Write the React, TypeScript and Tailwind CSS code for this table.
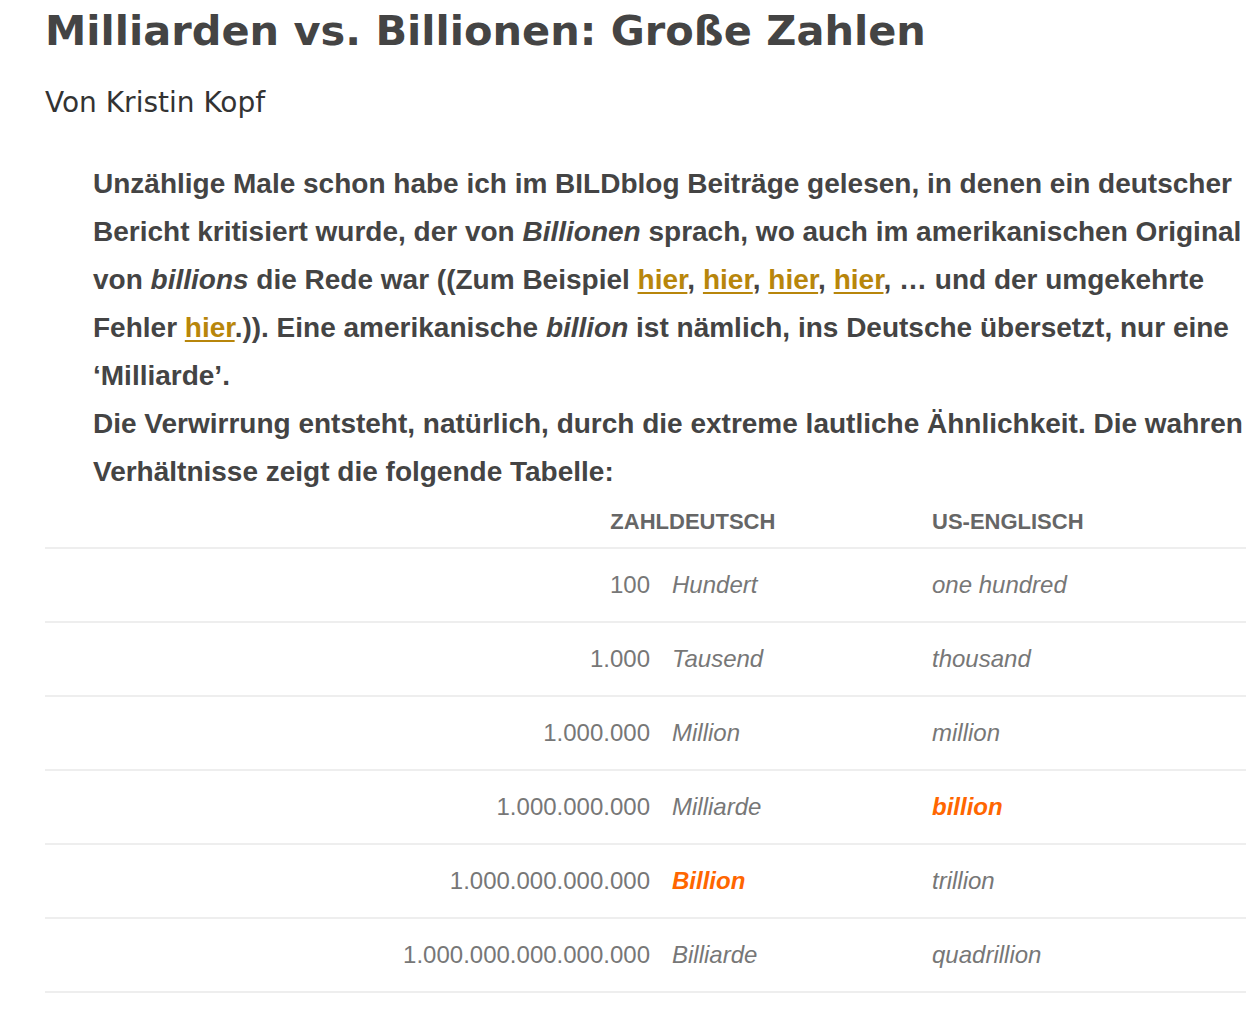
import React from "react";

const rows: { n: string; de: React.ReactNode; en: React.ReactNode }[] = [
  { n: "100", de: "Hundert", en: "one hundred" },
  { n: "1.000", de: "Tausend", en: "thousand" },
  { n: "1.000.000", de: "Million", en: "million" },
  { n: "1.000.000.000", de: "Milliarde", en: <strong className="font-bold text-[#ff6600]">billion</strong> },
  { n: "1.000.000.000.000", de: <strong className="font-bold text-[#ff6600]">Billion</strong>, en: "trillion" },
  { n: "1.000.000.000.000.000", de: "Billiarde", en: "quadrillion" },
];

const Link = ({ children }: { children: React.ReactNode }) => (
  <a href="#" className="text-[#b8860b] underline decoration-[#b8860b] underline-offset-[3px]">
    {children}
  </a>
);

export default function App() {
  return (
    <div className="w-[1246px] overflow-hidden bg-white pl-[45px] text-[#444]">
      <h1 className="pt-[5px] text-[41.5px] font-bold leading-[52px] text-[#444] [font-family:'DejaVu_Sans',sans-serif]">
        Milliarden vs. Billionen: Große Zahlen
      </h1>
      <p className="mt-[29px] text-[28px] leading-[34px] text-[#333] [font-family:'DejaVu_Sans',sans-serif]">
        Von Kristin Kopf
      </p>
      <div className="mt-[40px] pl-[48px] text-[28px] font-bold leading-[48px] text-[#444] [font-family:'Liberation_Sans',Arial,sans-serif]">
        <p>
          Unzählige Male schon habe ich im BILDblog Beiträge gelesen, in denen ein deutscher Bericht kritisiert wurde, der von{" "}
          <em>Billionen</em> sprach, wo auch im amerikanischen Original von <em>billions</em> die Rede war ((Zum Beispiel{" "}
          <Link>hier</Link>, <Link>hier</Link>, <Link>hier</Link>, <Link>hier</Link>, … und der umgekehrte Fehler{" "}
          <Link>hier</Link>.)). Eine amerikanische <em>billion</em> ist nämlich, ins Deutsche übersetzt, nur eine ‘Milliarde’.
        </p>
        <p>
          Die Verwirrung entsteht, natürlich, durch die extreme lautliche Ähnlichkeit. Die wahren Verhältnisse zeigt die folgende Tabelle:
        </p>
      </div>
      <table className="w-[1201px] border-collapse text-[24px] text-[#777] [font-family:'Liberation_Sans',Arial,sans-serif]">
        <colgroup>
          <col className="w-[624px]" />
          <col className="w-[260px]" />
          <col />
        </colgroup>
        <thead>
          <tr className="h-[52px] border-b-2 border-[#eee]">
            <th className="pr-0 text-right text-[22px] font-bold uppercase text-[#666]">Zahl</th>
            <th className="pl-0 text-left text-[22px] font-bold uppercase text-[#666]">Deutsch</th>
            <th className="pl-[3px] text-left text-[22px] font-bold uppercase text-[#666]">US-Englisch</th>
          </tr>
        </thead>
        <tbody>
          {rows.map((r, i) => (
            <tr key={i} className="h-[74px] border-b-2 border-[#eee]">
              <td className="pr-[19px] text-right">{r.n}</td>
              <td className="pl-[3px] italic">{r.de}</td>
              <td className="pl-[3px] italic">{r.en}</td>
            </tr>
          ))}
        </tbody>
      </table>
    </div>
  );
}
